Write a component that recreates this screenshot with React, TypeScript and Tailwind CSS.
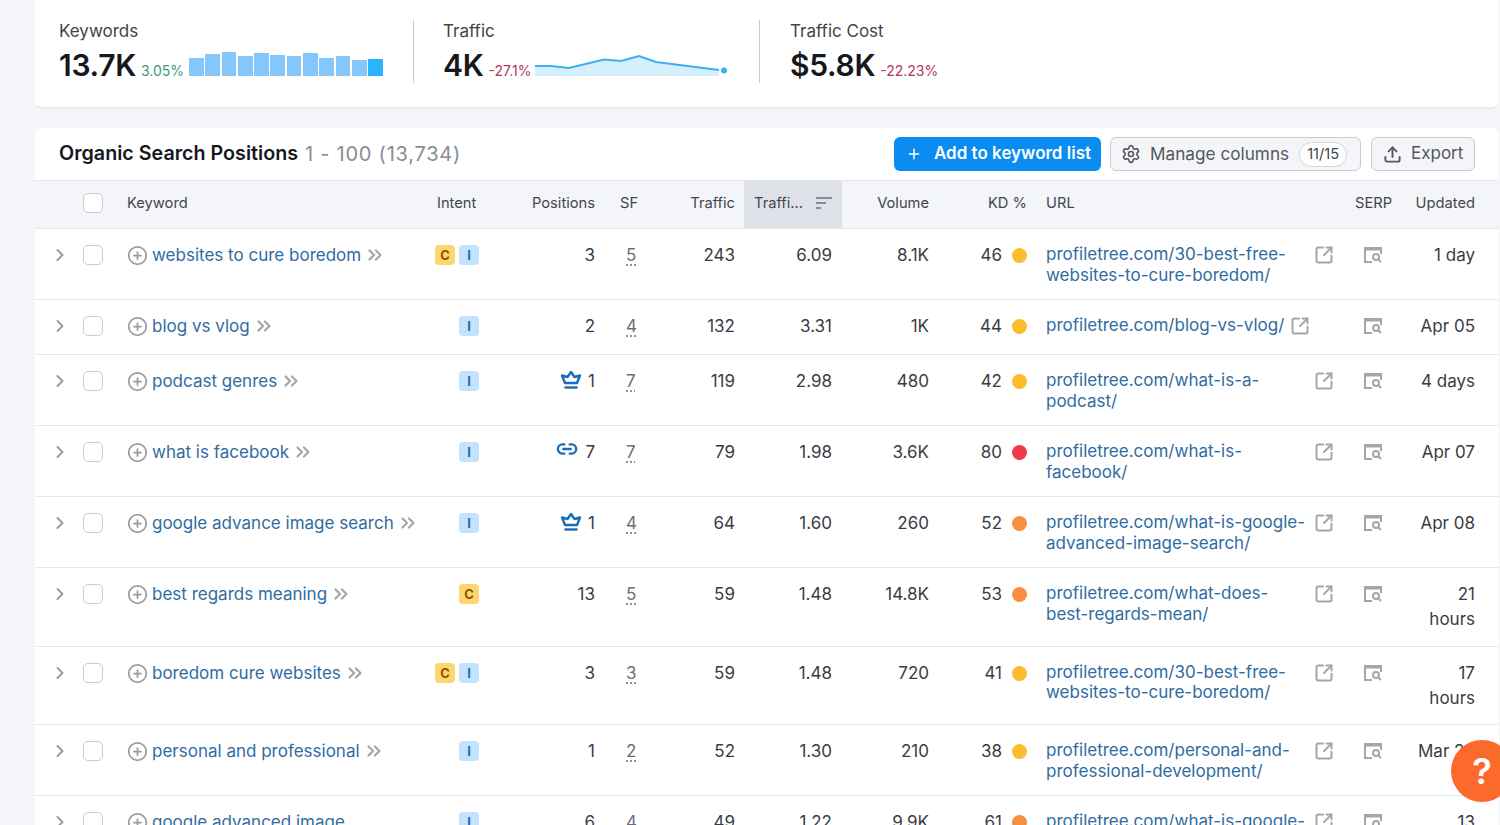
import { ChevronRight, ChevronsRight, CirclePlus, Link2, Plus, Settings, SquareArrowOutUpRight, Upload } from "lucide-react";

type KeywordRow = {
  keyword: string;
  intent: string[];
  badge?: "crown" | "link";
  position: number;
  sf: number;
  traffic: number;
  share: string;
  volume: string;
  kd: number;
  dot: string;
  url: string;
  updated: string;
};

const ROWS: KeywordRow[] = [
  { keyword: "websites to cure boredom", intent: ["C", "I"], position: 3, sf: 5, traffic: 243, share: "6.09", volume: "8.1K", kd: 46, dot: "bg-[#fbbd2e]", url: "profiletree.com/30-best-free-websites-to-cure-boredom/", updated: "1 day" },
  { keyword: "blog vs vlog", intent: ["I"], position: 2, sf: 4, traffic: 132, share: "3.31", volume: "1K", kd: 44, dot: "bg-[#fbbd2e]", url: "profiletree.com/blog-vs-vlog/", updated: "Apr 05" },
  { keyword: "podcast genres", intent: ["I"], badge: "crown", position: 1, sf: 7, traffic: 119, share: "2.98", volume: "480", kd: 42, dot: "bg-[#fbbd2e]", url: "profiletree.com/what-is-a-podcast/", updated: "4 days" },
  { keyword: "what is facebook", intent: ["I"], badge: "link", position: 7, sf: 7, traffic: 79, share: "1.98", volume: "3.6K", kd: 80, dot: "bg-[#f0384e]", url: "profiletree.com/what-is-facebook/", updated: "Apr 07" },
  { keyword: "google advance image search", intent: ["I"], badge: "crown", position: 1, sf: 4, traffic: 64, share: "1.60", volume: "260", kd: 52, dot: "bg-[#f98e3c]", url: "profiletree.com/what-is-google-advanced-image-search/", updated: "Apr 08" },
  { keyword: "best regards meaning", intent: ["C"], position: 13, sf: 5, traffic: 59, share: "1.48", volume: "14.8K", kd: 53, dot: "bg-[#f98e3c]", url: "profiletree.com/what-does-best-regards-mean/", updated: "21 hours" },
  { keyword: "boredom cure websites", intent: ["C", "I"], position: 3, sf: 3, traffic: 59, share: "1.48", volume: "720", kd: 41, dot: "bg-[#fbbd2e]", url: "profiletree.com/30-best-free-websites-to-cure-boredom/", updated: "17 hours" },
  { keyword: "personal and professional", intent: ["I"], position: 1, sf: 2, traffic: 52, share: "1.30", volume: "210", kd: 38, dot: "bg-[#fbbd2e]", url: "profiletree.com/personal-and-professional-development/", updated: "Mar 29" },
  { keyword: "google advanced image search", intent: ["I"], position: 6, sf: 4, traffic: 49, share: "1.22", volume: "9.9K", kd: 61, dot: "bg-[#f98e3c]", url: "profiletree.com/what-is-google-advanced-image-search/", updated: "13 hours" },
];

const BARS = [18, 22, 24, 20, 23, 21, 20, 23, 18, 20, 16, 17];

const GRID = "grid grid-cols-[39px_43px_310px_60px_118px_42px_97px_98px_97px_97px_309px_60px_80px]";

function Crown() {
  return (
    <svg width="22" height="20" viewBox="0 0 22 20" fill="none" stroke="#1a6db5" strokeWidth="2.4" strokeLinejoin="round">
      <path d="M11 2 L14.5 7 L20 5.5 L17 13 H5 L2 5.5 L7.5 7 Z" />
      <path d="M4.5 17.5 H17.5" />
    </svg>
  );
}

function SerpIcon() {
  return (
    <svg width="20" height="18" viewBox="0 0 20 18" fill="none" stroke="#a4a6ad" strokeWidth="2">
      <path d="M9 16 H2 V2 H18 V8" />
      <path d="M2 3 H18" strokeWidth="3" />
      <circle cx="13" cy="11" r="3" />
      <path d="M15.5 13.5 L18 16" />
    </svg>
  );
}

function Metric({ label, value, delta, deltaColor, children, width }: { label: string; value: string; delta: string; deltaColor: string; children?: React.ReactNode; width: string }) {
  return (
    <div className={width}>
      <div className="text-[17px] leading-[22px] text-[#444]">{label}</div>
      <div className="mt-[5px] flex items-end">
        <span className="text-[30px] leading-[36px] font-semibold tracking-[-0.3px] text-[#16181d]">{value}</span>
        <span className={`mb-[3px] ml-[5px] text-[14px] leading-[18px] ${deltaColor}`}>{delta}</span>
        {children}
      </div>
    </div>
  );
}

function Row({ row }: { row: KeywordRow }) {
  // last word stays with the chevrons when a long keyword wraps
  const words = row.keyword.split(" ");
  const lastWord = words.pop();

  return (
    <div className={`${GRID} min-h-[55px] border-b border-[#e6e7eb] text-[17px] leading-[24px] text-[#3a3c44]`}>
      <div className="pt-[16px] pl-[15px]">
        <ChevronRight size={20} strokeWidth={2.4} className="text-[#9a9ca3]" />
      </div>
      <div className="pt-[16px] pl-[9px]">
        <div className="h-[20px] w-[20px] rounded-[5px] border border-[#c9cbd1] bg-white" />
      </div>
      <div className="flex items-start pt-[14px] pr-[8px] pl-[10px] text-[#306c9f]">
        <CirclePlus size={21} strokeWidth={2} className="mt-[2px] shrink-0 text-[#9a9ca3]" />
        <span className="ml-[4px]">
          {words.join(" ")}{" "}
          <span className="whitespace-nowrap">
            {lastWord}
            <ChevronsRight size={22} strokeWidth={2.4} className="ml-[3px] inline align-[-5px] text-[#a4a6ad]" />
          </span>
        </span>
      </div>
      <div className="flex justify-end gap-[4px] pt-[16px] pr-[8px]">
        {row.intent.map((i) => (
          <span
            key={i}
            className={
              i === "C"
                ? "flex h-[20px] w-[20px] items-center justify-center rounded-[4px] bg-[#ffd66e] text-[13px] font-bold text-[#8a5a00]"
                : "flex h-[20px] w-[20px] items-center justify-center rounded-[4px] bg-[#c4e2fb] text-[13px] font-bold text-[#1a6db5]"
            }
          >
            {i}
          </span>
        ))}
      </div>
      <div className="flex items-start justify-end pt-[14px] pr-[10px]">
        {row.badge === "crown" && <span className="mt-[1px] mr-[6px]"><Crown /></span>}
        {row.badge === "link" && <Link2 size={22} strokeWidth={2.6} className="mt-[-2px] mr-[7px] text-[#1a6db5]" />}
        <span>{row.position}</span>
      </div>
      <div className="pt-[14px] pl-[21px] text-[#6c6e79]">
        <span className="underline decoration-dotted underline-offset-4">{row.sf}</span>
      </div>
      <div className="pt-[14px] pr-[9px] text-right">{row.traffic}</div>
      <div className="pt-[14px] pr-[10px] text-right">{row.share}</div>
      <div className="pt-[14px] pr-[10px] text-right">{row.volume}</div>
      <div className="flex justify-end pt-[14px] pr-[9px]">
        <span>{row.kd}</span>
        <span className={`mt-[5px] ml-[10px] h-[15px] w-[15px] rounded-full ${row.dot}`} />
      </div>
      <div className="flex items-start gap-[6px] pt-[15px] pb-[14px] pl-[10px] leading-[20.5px] text-[#306c9f]">
        <span className="max-w-[262px]">{row.url}</span>
        <SquareArrowOutUpRight size={20} strokeWidth={2.4} className="mt-[1px] shrink-0 text-[#a4a6ad]" />
      </div>
      <div className="pt-[17px] pl-[18px]">
        <SerpIcon />
      </div>
      <div className="pt-[14px] pr-[10px] pb-[13.5px] pl-[10px] text-right leading-[25px]">{row.updated}</div>
    </div>
  );
}

export default function App() {
  return (
    <div className="relative h-[825px] overflow-hidden bg-[#f3f5f9] pr-px pl-[35px] font-['Inter',sans-serif]">
      {/* top summary */}
      <div className="flex h-[109px] items-start rounded-b-[8px] border-b-2 border-[#e8e9ed] bg-white pt-[20px] pl-[24px]">
        <Metric label="Keywords" value="13.7K" delta="3.05%" deltaColor="text-[#3f9a78]" width="w-[355px] border-r border-[#c9cbd1] h-[63px]">
          <div className="mb-[7px] ml-[5px] flex h-[24px] items-end gap-[1.6px]">
            {BARS.map((h, i) => (
              <div
                key={i}
                className={i === BARS.length - 1 ? "w-[14.7px] bg-[#2bb3ff]" : "w-[14.7px] bg-[#85c6fb]"}
                style={{ height: h }}
              />
            ))}
          </div>
        </Metric>
        <div className="pl-[29px]">
          <Metric label="Traffic" value="4K" delta="-27.1%" deltaColor="text-[#b0385f]" width="w-[317px] border-r border-[#c9cbd1] h-[63px]">
            <svg width="196" height="26" viewBox="535 52 196 26" className="mb-[5px] ml-[3px]">
              <path d="M536 66 L552 66 L570 68 L605 59.5 L622 61 L640 56 L657 62 L720 70 V76 H536 Z" fill="#d6effd" />
              <path d="M536 66 L552 66 L570 68 L605 59.5 L622 61 L640 56 L657 62 L720 70" fill="none" stroke="#3cb1ee" strokeWidth="2" />
              <circle cx="725" cy="70.5" r="3" fill="#3cb1ee" />
            </svg>
          </Metric>
        </div>
        <div className="pl-[30px]">
          <Metric label="Traffic Cost" value="$5.8K" delta="-22.23%" deltaColor="text-[#b0385f]" width="w-[300px]" />
        </div>
      </div>

      {/* keyword table */}
      <div className="mt-[19px] rounded-t-[8px] bg-white">
        <div className="flex h-[52px] items-center pr-[24px] pl-[24px]">
          <h2 className="mb-[1px] text-[19.7px] font-semibold text-[#16181d]">Organic Search Positions</h2>
          <span className="mb-[1px] ml-[7px] text-[20px] tracking-[0.75px] text-[#8a8c94]">1 - 100 (13,734)</span>
          <button className="ml-auto flex h-[34px] w-[207px] items-center rounded-[6px] bg-[#0a8cf0] pl-[12px] text-[17px] font-semibold text-white">
            <Plus size={16} strokeWidth={2.2} />
            <span className="mb-[1px] ml-[12px]">Add to keyword list</span>
          </button>
          <button className="ml-[9px] flex h-[34px] w-[251px] items-center rounded-[6px] border border-[#c9cbd1] bg-[#f4f5f9] pl-[10px] text-[17.2px] text-[#55575f]">
            <Settings size={20} strokeWidth={2} />
            <span className="mb-[1px] ml-[9px]">Manage columns</span>
            <span className="ml-[10px] rounded-full border border-[#d5d7dc] bg-white px-[7px] text-[14.7px] leading-[23px] text-[#444]">11/15</span>
          </button>
          <button className="ml-[10px] flex h-[34px] w-[104px] items-center rounded-[6px] border border-[#c9cbd1] bg-[#f4f5f9] pl-[11px] text-[17px] text-[#55575f]">
            <Upload size={19} strokeWidth={2.4} />
            <span className="mb-[1px] ml-[9px]">Export</span>
          </button>
        </div>

        <div className={`${GRID} h-[49px] items-center border-y border-[#e6e7eb] bg-[#f3f5f9] text-[14.7px] text-[#44464e]`}>
          <div />
          <div className="pb-[3px] pl-[9px]">
            <div className="h-[20px] w-[20px] rounded-[5px] border border-[#c9cbd1] bg-white" />
          </div>
          <div className="pb-[3px] pl-[10px]">Keyword</div>
          <div className="pb-[3px] pl-[10px]">Intent</div>
          <div className="pr-[10px] pb-[3px] text-right">Positions</div>
          <div className="pb-[3px] pl-[15px]">SF</div>
          <div className="pr-[9px] pb-[3px] text-right">Traffic</div>
          <div className="flex h-full items-center justify-between bg-[#dfe1e8] pr-[10px] pb-[3px] pl-[10px]">
            <span>Traffi...</span>
            <svg width="16" height="14" viewBox="0 0 16 14" stroke="#8a8c94" strokeWidth="2">
              <path d="M0 2 H16 M0 7 H10 M0 12 H5" />
            </svg>
          </div>
          <div className="pr-[10px] pb-[3px] text-right">Volume</div>
          <div className="pr-[9px] pb-[3px] text-right">KD %</div>
          <div className="pb-[3px] pl-[10px]">URL</div>
          <div className="pb-[3px] pl-[10px]">SERP</div>
          <div className="pr-[10px] pb-[3px] text-right">Updated</div>
        </div>

        {ROWS.map((row, i) => (
          <Row key={i} row={row} />
        ))}
      </div>

      <div className="absolute top-[740px] left-[1451px] flex h-[62px] w-[62px] items-center justify-center rounded-full bg-[#fb6a2a] text-[36px] font-semibold text-white">
        ?
      </div>
    </div>
  );
}
